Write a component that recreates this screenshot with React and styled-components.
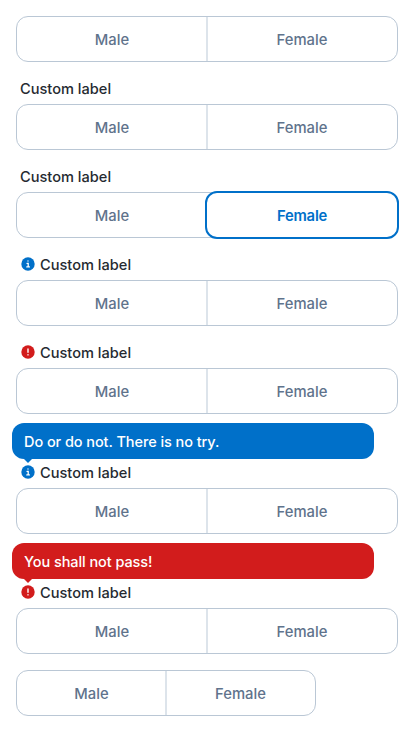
import React from "react";
import styled, { createGlobalStyle } from "styled-components";

const Global = createGlobalStyle`
  *, *::before, *::after { box-sizing: border-box; }
  body { margin: 0; background: #fff; }
`;

const Page = styled.main`
  font-family: Inter, "Liberation Sans", sans-serif;
  font-size: 14.8px;
  line-height: 24px;
  font-weight: 500;
  color: #252a31;
  padding: 16px;
  display: flex;
  flex-direction: column;
  gap: 16px;
`;

const Field = styled.div`
  position: relative;
  display: flex;
  flex-direction: column;
  width: ${(p) => p.$width || "382px"};
  margin-top: ${(p) => (p.$spaced ? "32px" : "0")};
`;

const Label = styled.div`
  display: flex;
  align-items: center;
  height: 22px;
  margin-bottom: 4px;
  padding-left: 4px;
  font-size: 14.6px;
`;

const IconBox = styled.span`
  display: flex;
  width: 16px;
  height: 16px;
  margin: 0 4px 2px 0;
  color: ${(p) => (p.$error ? "#d21c1c" : "#0070c9")};
`;

const Segments = styled.div`
  display: flex;
  height: 46px;
  border: 1px solid #bac7d5;
  border-radius: 12px;
`;

const Segment = styled.div`
  flex: 1 1 0;
  display: flex;
  align-items: center;
  justify-content: center;
  position: relative;
  padding-top: 2px;
  color: #5f738c;
  font-weight: 550;

  & + &::before {
    content: "";
    position: absolute;
    left: -1px;
    top: 0;
    bottom: 0;
    width: 2px;
    background: #dde4eb;
  }
`;

const SelectedSegment = styled(Segment)`
  color: #0070c9;
  font-weight: 600;
  letter-spacing: -0.2px;

  &&::before {
    inset: -2px;
    width: auto;
    border: 2px solid #0070c9;
    border-radius: 12px;
    background: #fff;
  }
`;

const SegmentText = styled.span`
  position: relative;
`;

const Tooltip = styled.div`
  position: absolute;
  left: -4px;
  top: -39px;
  width: 362px;
  height: 36px;
  padding: 7px 12px 5px;
  border-radius: 12px;
  color: #fff;
  font-size: 14.5px;
  letter-spacing: -0.07px;
  background: ${(p) => (p.$error ? "#d21c1c" : "#0070c9")};

  &::after {
    content: "";
    position: absolute;
    left: 12px;
    top: 100%;
    border: 4px solid transparent;
    border-bottom: 0;
    border-top-color: ${(p) => (p.$error ? "#d21c1c" : "#0070c9")};
  }
`;

function StatusIcon({ error }) {
  return (
    <IconBox $error={error}>
      <svg width="16" height="16" viewBox="0 0 16 16">
        <circle cx="8" cy="8" r="6.7" fill="currentColor" />
        {error ? (
          <path d="M8 5v3.3M8 10.8v.1" stroke="#fff" strokeWidth="1.4" strokeLinecap="round" />
        ) : (
          <path d="M7 7.3h1.2v3.4M6.8 10.9h2.6M8 4.9v.2" fill="none" stroke="#fff" strokeWidth="1.3" strokeLinecap="round" />
        )}
      </svg>
    </IconBox>
  );
}

function Choice({ label, status, message, selected, width, spaced }) {
  const error = status === "error";
  const Second = selected ? SelectedSegment : Segment;
  return (
    <Field $width={width} $spaced={spaced}>
      {message && <Tooltip $error={error}>{message}</Tooltip>}
      {label && (
        <Label>
          {status && <StatusIcon error={error} />}
          {label}
        </Label>
      )}
      <Segments>
        <Segment>
          <SegmentText>Male</SegmentText>
        </Segment>
        <Second>
          <SegmentText>Female</SegmentText>
        </Second>
      </Segments>
    </Field>
  );
}

export default function App() {
  return (
    <Page>
      <Global />
      <Choice />
      <Choice label="Custom label" />
      <Choice label="Custom label" selected />
      <Choice label="Custom label" status="info" />
      <Choice label="Custom label" status="error" />
      <Choice label="Custom label" status="info" message="Do or do not. There is no try." spaced />
      <Choice label="Custom label" status="error" message="You shall not pass!" spaced />
      <Choice width="300px" />
    </Page>
  );
}
